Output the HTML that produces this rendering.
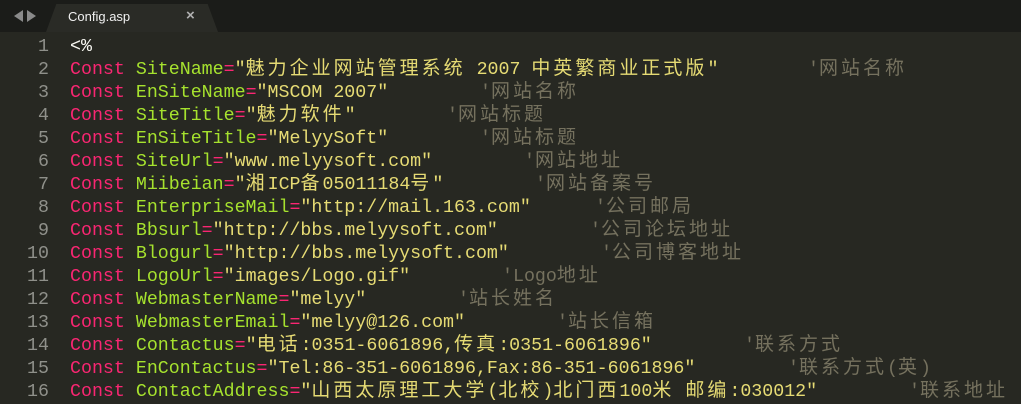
<!DOCTYPE html>
<html><head><meta charset="utf-8">
<style>
html,body{margin:0;padding:0;background:#272822;width:1021px;height:403px;overflow:hidden}
.bar{position:absolute;left:0;top:0;width:1021px;height:32px;background:#1b1c19}
.tab{position:absolute;left:46px;top:4px;width:172px;height:28px;background:#2a2b26;clip-path:polygon(6% 0,94% 0,100% 100%,0 100%)}
.tabt{position:absolute;left:68px;top:9px;font:13px "Liberation Sans",sans-serif;color:#f0f0f0}
.x{position:absolute;left:186px;top:7px;font:bold 15px "Liberation Sans",sans-serif;color:#b0b0b0}
.arr{position:absolute;top:10px;width:0;height:0;border-top:6px solid transparent;border-bottom:6px solid transparent}
.ed{position:absolute;left:0;top:32px;width:1021px;height:371px;background:#272822}
.ln{position:absolute;left:0;width:49px;text-align:right;color:#8f908a}
.l,.ln,.c{font-family:"Liberation Mono","Noto Sans CJK SC",monospace;font-size:18.3px;line-height:23px;white-space:pre;position:absolute}
.l{left:70px;color:#f8f8f2}
.k{color:#f92672}.n{color:#a6e22e}.s{color:#e6db74}.c{color:#75715e}
.z{letter-spacing:3px;font-size:19px;line-height:1}
</style></head><body>
<div class="bar"></div>
<div class="arr" style="left:14px;border-right:9px solid #8a8a8a"></div>
<div class="arr" style="left:27px;border-left:9px solid #8a8a8a"></div>
<div class="tab"></div>
<div class="tabt">Config.asp</div>
<div class="x">×</div>
<div class="ed"></div>
<div id="code"></div>
<script>
var L=[
['<%',null,null,null,null],
['SiteName','魅力企业网站管理系统 2007 中英繁商业正式版',808,'网站名称'],
['EnSiteName','MSCOM 2007',480,'网站名称'],
['SiteTitle','魅力软件',447,'网站标题'],
['EnSiteTitle','MelyySoft',480,'网站标题'],
['SiteUrl','www.melyysoft.com',524,'网站地址'],
['Miibeian','湘ICP备05011184号',535,'网站备案号'],
['EnterpriseMail','http://mail.163.com',595,'公司邮局'],
['Bbsurl','http://bbs.melyysoft.com',590,'公司论坛地址'],
['Blogurl','http://bbs.melyysoft.com',601,'公司博客地址'],
['LogoUrl','images/Logo.gif',502,'Logo地址'],
['WebmasterName','melyy',458,'站长姓名'],
['WebmasterEmail','melyy@126.com',557,'站长信箱'],
['Contactus','电话:0351-6061896,传真:0351-6061896',744,'联系方式'],
['EnContactus','Tel:86-351-6061896,Fax:86-351-6061896',788,'联系方式(英)'],
['ContactAddress','山西太原理工大学(北校)北门西100米 邮编:030012',909,'联系地址']];
function z(t){return t.replace(/([^\x00-\x7f]+)/g,'<span class="z">$1</span>')}
var h='';
L.forEach(function(r,i){
 var y=32+4+i*23;
 h+='<div class="ln" style="top:'+y+'px">'+(i+1)+'</div>';
 if(i==0){h+='<div class="l" style="top:'+y+'px">&lt;%</div>';return;}
 h+='<div class="l" style="top:'+y+'px"><span class="k">Const</span> <span class="n">'+r[0]+'</span><span class="k">=</span><span class="s">"'+z(r[1])+'"</span></div>';
 h+='<div class="c" style="top:'+y+'px;left:'+r[2]+'px">\''+z(r[3])+'</div>';
});
document.getElementById('code').innerHTML=h;
</script>
</body></html>
